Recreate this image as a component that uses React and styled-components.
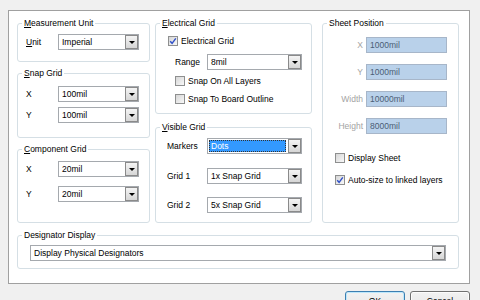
import React from "react";
import styled, { createGlobalStyle, css } from "styled-components";

const GlobalStyle = createGlobalStyle`
  html, body { margin: 0; padding: 0; background: #f0f0f0; }
  body {
    font-family: "Liberation Sans", Arial, sans-serif;
    font-size: 8.5px;
    color: #000;
  }
  #root { width: 480px; height: 300px; }
`;

const Dialog = styled.div`
  width: 480px;
  height: 300px;
  box-sizing: border-box;
  padding: 10px 10px 0 8px;
  overflow: hidden;
  background: #f0f0f0;
`;

const Panel = styled.div`
  box-sizing: border-box;
  width: 462px;
  height: 274px;
  border: 1px solid #a0a0a0;
  background: #fff;
  padding: 12px 10px 0 8px;
  display: flex;
  flex-direction: column;
`;

const Columns = styled.div`
  display: flex;
  align-items: flex-start;
`;

const Column = styled.div`
  display: flex;
  flex-direction: column;
  width: ${(p) => p.$w}px;
  margin-left: ${(p) => p.$ml || 0}px;
`;

const Group = styled.div`
  position: relative;
  box-sizing: border-box;
  height: ${(p) => p.$h}px;
  margin-top: ${(p) => p.$mt || 0}px;
  border: 1px solid #d5dfe5;
  border-radius: 3px;
  padding-top: ${(p) => p.$pt}px;
  display: flex;
  flex-direction: column;
`;

const GroupTitle = styled.span`
  position: absolute;
  top: -7px;
  left: 4px;
  padding: 0 2px;
  background: #fff;
  line-height: 12px;
  white-space: nowrap;
`;

const Row = styled.div`
  display: flex;
  align-items: center;
  height: ${(p) => p.$h || 16}px;
  margin-top: ${(p) => p.$mt || 0}px;
  padding-left: ${(p) => p.$pl || 0}px;
  white-space: nowrap;
`;

const Label = styled.span`
  box-sizing: border-box;
  flex: none;
  width: ${(p) => p.$w}px;
  padding-right: ${(p) => p.$pr || 0}px;
  text-align: ${(p) => p.$align || "left"};
  color: ${(p) => (p.$disabled ? "#a3a3a3" : "#000")};
`;

const Combo = styled.div`
  box-sizing: border-box;
  flex: none;
  width: ${(p) => p.$w}px;
  height: 16px;
  border: 1px solid #a5a9ae;
  background: #fff;
  display: flex;
  align-items: stretch;
`;

const ComboValue = styled.div`
  flex: 1;
  display: flex;
  align-items: center;
  padding-left: 2px;
  margin: 1px 2px 1px 1px;
  overflow: hidden;
  ${(p) =>
    p.$selected &&
    css`
      background: #3399ff;
      color: #fff;
      outline: 1px dotted #333;
      outline-offset: -1px;
    `}
`;

const DropButton = styled.div`
  box-sizing: border-box;
  width: 13px;
  border: 1px solid #8a8a8a;
  background: linear-gradient(#f4f4f4, #d6d6d6);
  display: flex;
  align-items: center;
  justify-content: center;
`;

const Arrow = styled.span`
  width: 0;
  height: 0;
  border-left: 3px solid transparent;
  border-right: 3px solid transparent;
  border-top: 3px solid #000;
`;

const Box = styled.span`
  box-sizing: border-box;
  flex: none;
  width: 10px;
  height: 10px;
  margin-right: 3px;
  border: 1px solid #8e8f8f;
  background: linear-gradient(135deg, #d6d6d6, #f8f8f8);
  display: flex;
  align-items: center;
  justify-content: center;
`;

const Field = styled.div`
  box-sizing: border-box;
  flex: none;
  width: 81px;
  height: 16px;
  border: 1px solid #a7b6c9;
  background: #b9d1ea;
  color: #4b5d75;
  padding-left: 3px;
  display: flex;
  align-items: center;
`;

const ButtonBar = styled.div`
  display: flex;
  justify-content: flex-end;
  gap: 5px;
  margin-top: 7px;
`;

const Button = styled.button`
  box-sizing: border-box;
  width: 60px;
  height: 22px;
  padding: 3px 0 0;
  margin: 0;
  font: inherit;
  line-height: 12px;
  color: #000;
  border-radius: 3px;
  border: 1px solid ${(p) => (p.$default ? "#3c7fb1" : "#707070")};
  background: linear-gradient(#f2f2f2, #ebebeb 50%, #dddddd 51%, #cfcfcf);
  box-shadow: ${(p) => (p.$default ? "inset 0 0 0 1px #bde7fb" : "inset 0 0 0 1px #fcfcfc")};
  display: flex;
  justify-content: center;
  align-items: flex-start;
`;

const ComboBox = ({ w, value, selected }) => (
  <Combo $w={w}>
    <ComboValue $selected={selected}>{value}</ComboValue>
    <DropButton>
      <Arrow />
    </DropButton>
  </Combo>
);

const CheckBox = ({ checked }) => (
  <Box>
    {checked && (
      <svg width="8" height="8" viewBox="0 0 8 8">
        <path d="M1.2 4.2 L3.1 6.3 L6.8 1.3" fill="none" stroke="#2f4fc8" strokeWidth="1.4" />
      </svg>
    )}
  </Box>
);

const ComboRow = ({ label, lw, pl, mt, w, value, selected }) => (
  <Row $pl={pl} $mt={mt}>
    <Label $w={lw}>{label}</Label>
    <ComboBox w={w} value={value} selected={selected} />
  </Row>
);

const SheetRow = ({ label, value, mt }) => (
  <Row $mt={mt}>
    <Label $w={43} $pr={3} $align="right" $disabled>
      {label}
    </Label>
    <Field>{value}</Field>
  </Row>
);

const CheckRow = ({ label, checked, pl, mt }) => (
  <Row $h={14} $pl={pl} $mt={mt}>
    <CheckBox checked={checked} />
    <span>{label}</span>
  </Row>
);

export default function App() {
  return (
    <>
      <GlobalStyle />
      <Dialog>
        <Panel>
          <Columns>
            <Column $w={133}>
              <Group $h={39} $pt={10}>
                <GroupTitle>
                  <u>M</u>easurement Unit
                </GroupTitle>
                <ComboRow pl={8} lw={32} w={81} value="Imperial" label={<><u>U</u>nit</>} />
              </Group>
              <Group $h={65} $pt={12} $mt={11}>
                <GroupTitle>
                  <u>S</u>nap Grid
                </GroupTitle>
                <ComboRow pl={8} lw={32} w={81} value="100mil" label="X" />
                <ComboRow pl={8} lw={32} w={81} value="100mil" label="Y" mt={5} />
              </Group>
              <Group $h={74} $pt={11} $mt={11}>
                <GroupTitle>
                  <u>C</u>omponent Grid
                </GroupTitle>
                <ComboRow pl={8} lw={32} w={81} value="20mil" label="X" />
                <ComboRow pl={8} lw={32} w={81} value="20mil" label="Y" mt={9} />
              </Group>
            </Column>

            <Column $w={157} $ml={5}>
              <Group $h={91} $pt={10}>
                <GroupTitle>
                  <u>E</u>lectrical Grid
                </GroupTitle>
                <CheckRow pl={12} checked label="Electrical Grid" />
                <ComboRow pl={19} lw={32} w={95} value="8mil" label="Range" mt={6} />
                <CheckRow pl={19} mt={4} label="Snap On All Layers" />
                <CheckRow pl={19} mt={4} label="Snap To Board Outline" />
              </Group>
              <Group $h={96} $pt={10} $mt={13}>
                <GroupTitle>
                  <u>V</u>isible Grid
                </GroupTitle>
                <ComboRow pl={11} lw={40} w={95} value="Dots" label="Markers" selected />
                <ComboRow pl={11} lw={40} w={95} value="1x Snap Grid" label="Grid 1" mt={14} />
                <ComboRow pl={11} lw={40} w={95} value="5x Snap Grid" label="Grid 2" mt={13} />
              </Group>
            </Column>

            <Column $w={137} $ml={10}>
              <Group $h={200} $pt={13}>
                <GroupTitle>Sheet Position</GroupTitle>
                <SheetRow label="X" value="1000mil" />
                <SheetRow label="Y" value="1000mil" mt={11} />
                <SheetRow label="Width" value="10000mil" mt={11} />
                <SheetRow label="Height" value="8000mil" mt={11} />
                <CheckRow pl={12} mt={17} label="Display Sheet" />
                <CheckRow pl={12} mt={8} checked label="Auto-size to linked layers" />
              </Group>
            </Column>
          </Columns>

          <Group $h={34} $pt={9} $mt={12}>
            <GroupTitle>Designator Display</GroupTitle>
            <Row $pl={12}>
              <ComboBox w={416} value="Display Physical Designators" />
            </Row>
          </Group>
        </Panel>

        <ButtonBar>
          <Button $default>OK</Button>
          <Button>Cancel</Button>
        </ButtonBar>
      </Dialog>
    </>
  );
}
